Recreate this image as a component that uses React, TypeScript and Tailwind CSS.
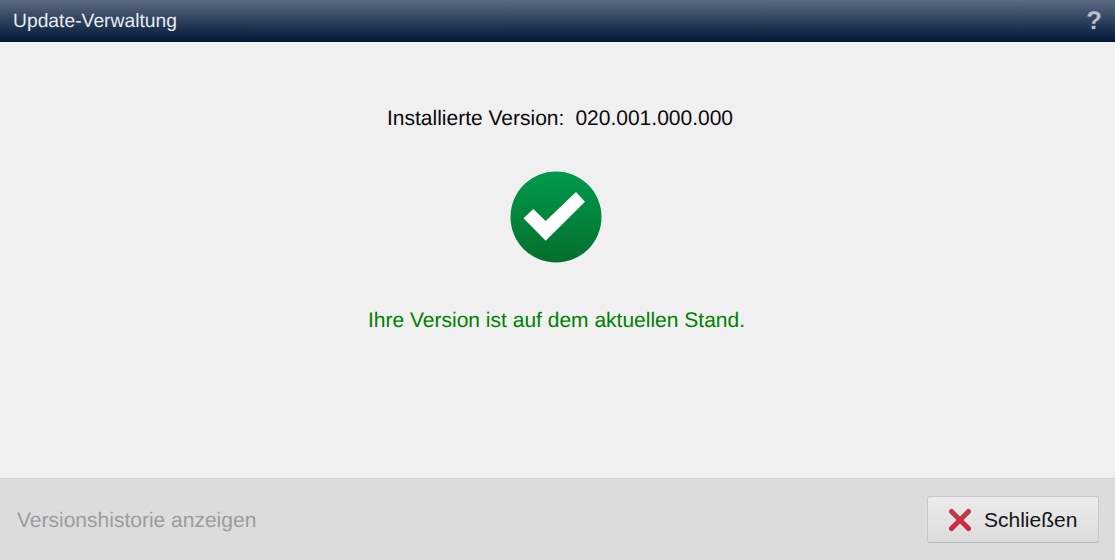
export default function App() {
  return (
    <div className="flex h-[560px] w-[1115px] flex-col overflow-hidden bg-[#f0f0f0] font-['Liberation_Sans',Arial,sans-serif] [text-rendering:geometricPrecision]">
      <header className="flex h-[42px] shrink-0 items-center justify-between bg-gradient-to-b from-[#5c6a82] to-[#031838] pl-[13px] pr-[13px]">
        <span className="mt-[2px] text-[19.3px] leading-none text-[#e8ecf2]">Update-Verwaltung</span>
        <span className="mt-[1px] text-[25.6px] font-bold leading-none text-[#b9c0cc]">?</span>
      </header>
      <main className="flex flex-1 flex-col items-center">
        <div className="mt-[64px] flex h-[24px] items-center gap-[11px] pl-[5px] text-[21px] leading-none text-[#0a0a0a]">
          <span>Installierte Version:</span>
          <span>020.001.000.000</span>
        </div>
        <svg className="mt-[41px] mr-[3px]" width="92" height="92" viewBox="0 0 92 92">
          <defs>
            <linearGradient id="g" x1="0" y1="0" x2="0" y2="1">
              <stop offset="0" stopColor="#009a4c" />
              <stop offset="1" stopColor="#056f2d" />
            </linearGradient>
          </defs>
          <circle cx="46" cy="46" r="45.5" fill="url(#g)" />
          <path d="M13.5 47.3 L23.3 38 L35.7 50 L66 21 L75 30.7 L35.7 69.7 Z" fill="#fff" />
        </svg>
        <div className="mt-[45px] mr-[2px] text-[21px] leading-[26px] text-[#008000]">Ihre Version ist auf dem aktuellen Stand.</div>
      </main>
      <footer className="flex h-[82px] shrink-0 items-center justify-between border-t border-[#d0d0d0] bg-[#dcdcdc] pl-[17px] pr-[16px]">
        <span className="mt-[1px] text-[21px] leading-none text-[#9c9c9c]">Versionshistorie anzeigen</span>
        <button className="flex h-[47px] w-[172px] items-center gap-[12px] rounded-[3px] border border-[#c8c8c8] border-b-[#b8b8b8] bg-gradient-to-b from-[#ececec] to-[#dcdcdc] pl-[20px] text-[21px] leading-none text-[#141414]">
          <svg width="24" height="24" viewBox="0 0 24 24" fill="none">
            <defs>
              <linearGradient id="x" x1="0" y1="0" x2="0" y2="24" gradientUnits="userSpaceOnUse">
                <stop offset="0" stopColor="#b9404f" />
                <stop offset="1" stopColor="#d81e3e" />
              </linearGradient>
            </defs>
            <path d="M3.5 3.5 L20.5 20.5 M20.5 3.5 L3.5 20.5" stroke="url(#x)" strokeWidth="5" strokeLinecap="round" />
          </svg>
          <span>Schließen</span>
        </button>
      </footer>
    </div>
  );
}
